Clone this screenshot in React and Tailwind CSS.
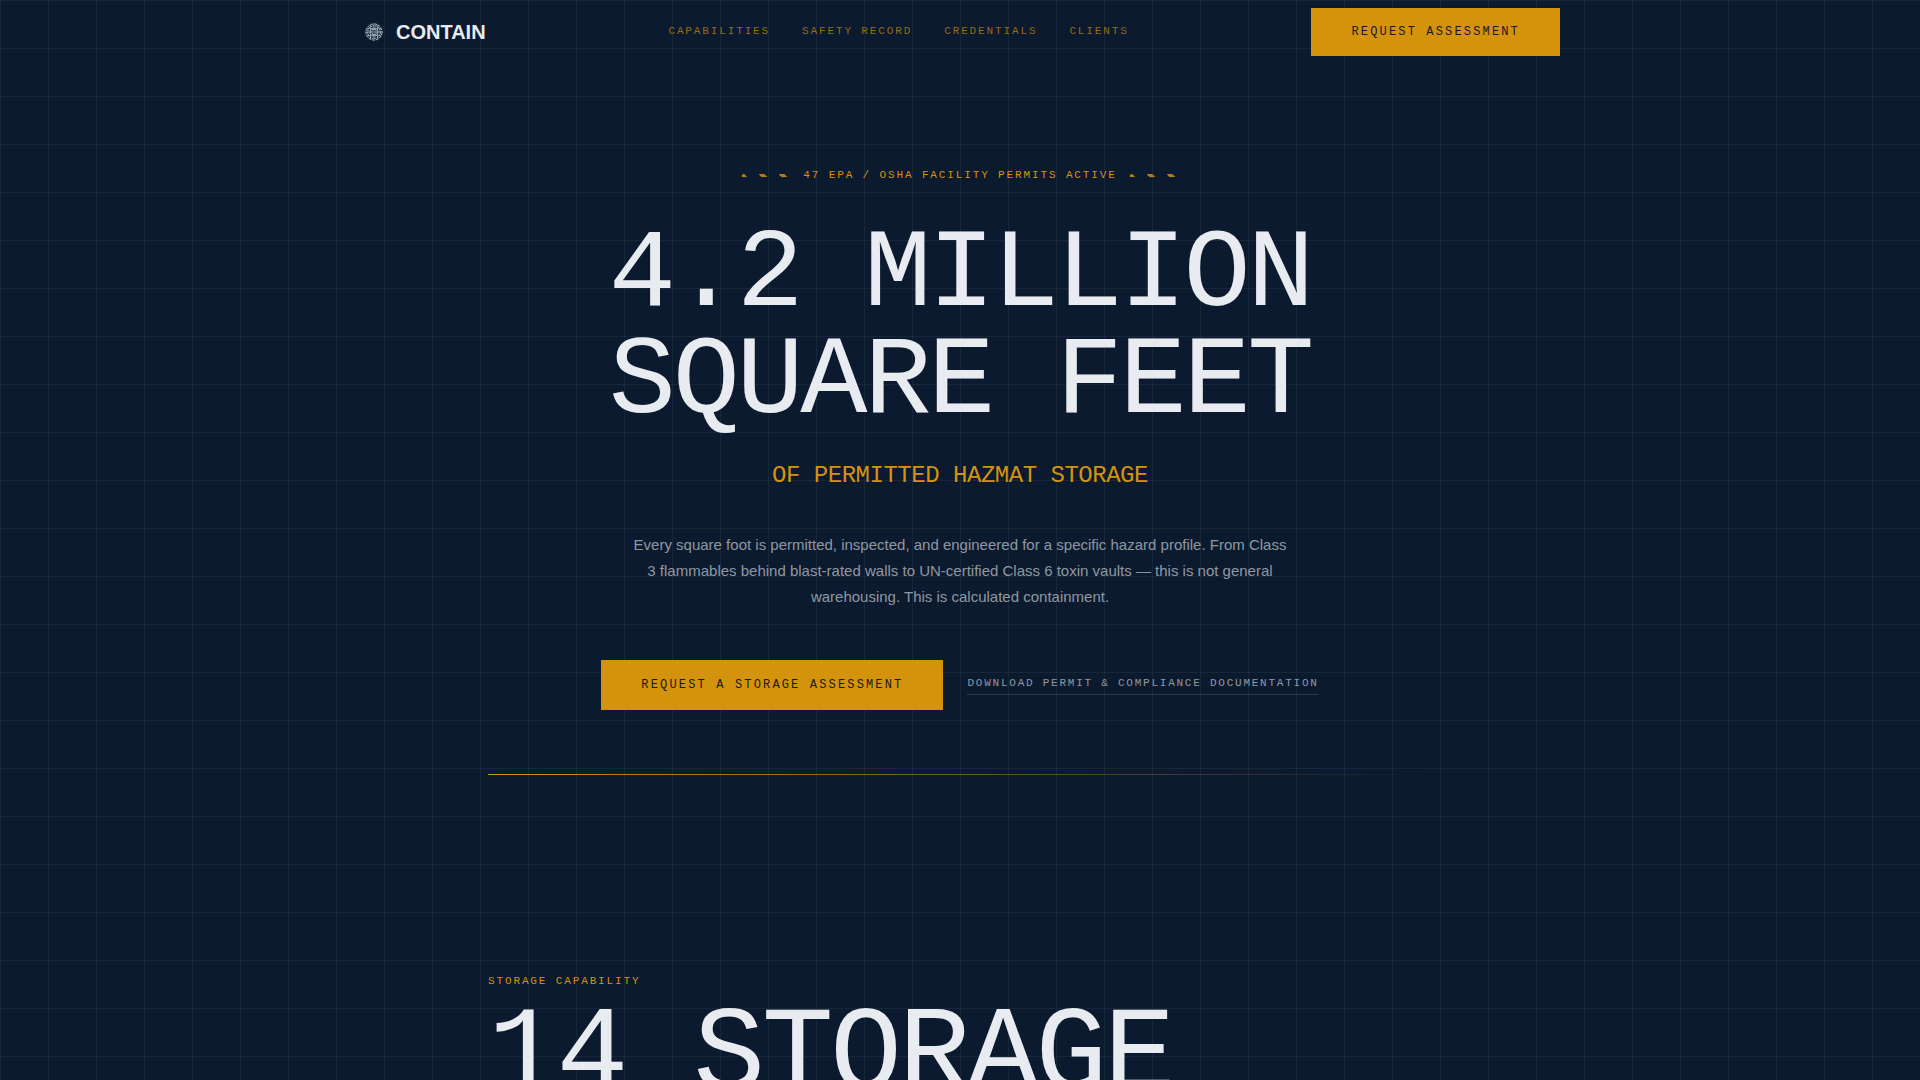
const navLinks = ["Capabilities", "Safety Record", "Credentials", "Clients"]

function LogoMark(){

  return(
    <svg viewBox="0 0 28 28" className="size-7" fill="none" stroke="#b8c4cc" aria-hidden="true">
      <circle cx="14" cy="14" r="8.1" strokeWidth="1" strokeDasharray="3 0.8" />
      <circle cx="14" cy="14" r="6.3" strokeWidth="1.1" strokeDasharray="1.8 0.7" />
      <circle cx="14" cy="14" r="4.2" strokeWidth="0.8" />
      <path d="M14 6v16M10.5 7v14M17.5 7v14M6 14h16M7 10.5h14M7 17.5h14" strokeWidth="0.5" />
      <path d="M12 11.5h4v5h-4z" strokeWidth="0.8" />
    </svg>
  )

}

// three small hazard flecks on either side of the permit line
function Flecks(){

  return(
    <svg viewBox="0 0 50 8" className="h-2 w-[50px]" fill="#d4930d" fillOpacity="0.85" aria-hidden="true">
      <path d="M0.5 5.5L1.5 3L4 3.5L6 6L2 6Z" />
      <path d="M18 3L23 3L26.5 5.8L21 6.2L19 4.8Z" />
      <path d="M38 3L43 3L46.5 5.8L41 6.2L39 4.8Z" />
    </svg>
  )

}

export default function App(){

  return(

    <div className="h-screen overflow-hidden bg-[#0b1a2e] bg-[linear-gradient(rgba(232,236,242,0.06)_1px,transparent_1px),linear-gradient(90deg,rgba(232,236,242,0.06)_1px,transparent_1px)] bg-size-[48px_48px] font-['Liberation_Sans',sans-serif] text-[#e8ecf0]">

      {/* HEADER */}

      <header className="mx-auto flex h-16 max-w-[1200px] items-center justify-between">

        <a href="#top" className="flex items-center gap-2 text-xl font-bold">
          <LogoMark />
          CONTAIN
        </a>

        <nav className="flex gap-8 pb-0.5 font-['Liberation_Mono',monospace] text-[11px] tracking-[0.17em] text-[#d4930d]/70 uppercase">
          {navLinks.map(label=>(
            <a key={label} href={`#${label.toLowerCase().replace(" ","-")}`}>{label}</a>
          ))}
        </nav>

        <button
          type="button"
          className="h-12 bg-[#d4930d] px-10 font-['Liberation_Mono',monospace] text-xs tracking-[0.18em] text-[#1a1a1a] uppercase"
        >
          Request Assessment
        </button>

      </header>


      <main className="mx-auto max-w-[944px]">

        {/* HERO */}

        <section className="flex flex-col items-center pt-[102px] text-center">

          <div className="flex items-center gap-3 font-['Liberation_Mono',monospace] text-[11px] leading-[18px] tracking-[0.17em] text-[#d4930d] uppercase">
            <Flecks />
            47 EPA / OSHA Facility Permits Active
            <Flecks />
          </div>

          <h1 className="mt-[38px] font-['Liberation_Mono',monospace] text-[112px] leading-[107px] tracking-[-0.03em] uppercase">
            4.2 Million<br />Square Feet
          </h1>

          <p className="mt-6 font-['Liberation_Mono',monospace] text-2xl tracking-[-0.02em] text-[#d4930d] uppercase">
            of Permitted Hazmat Storage
          </p>

          <p className="mt-10 max-w-[660px] text-[15px] leading-[26px] text-[#e8ecf0]/60">
            Every square foot is permitted, inspected, and engineered for a specific hazard profile. From Class 3 flammables behind blast-rated walls to UN-certified Class 6 toxin vaults — this is not general warehousing. This is calculated containment.
          </p>

          <div className="mt-[50px] flex items-center gap-6 font-['Liberation_Mono',monospace]">
            <button
              type="button"
              className="h-[50px] bg-[#d4930d] px-10 text-xs tracking-[0.18em] text-[#1a1a1a] uppercase"
            >
              Request a Storage Assessment
            </button>
            <a
              href="#documentation"
              className="border-b border-[#e8ecf0]/15 pb-0.5 text-[11px] tracking-[0.16em] text-[#e8ecf0]/60 uppercase"
            >
              Download Permit &amp; Compliance Documentation
            </a>
          </div>

          <div className="mt-16 h-px w-full bg-linear-to-r from-[#d4930d] to-transparent" />

        </section>


        {/* STORAGE CAPABILITY */}

        <section id="capabilities" className="pt-[198px]">

          <p className="font-['Liberation_Mono',monospace] text-[11px] leading-4 tracking-[0.17em] text-[#d4930d] uppercase">
            Storage Capability
          </p>

          <h2 className="mt-3.5 font-['Liberation_Mono',monospace] text-[120px] leading-[108px] tracking-[-0.03em] uppercase">
            14 Storage
          </h2>

        </section>

      </main>

    </div>

  )

}
